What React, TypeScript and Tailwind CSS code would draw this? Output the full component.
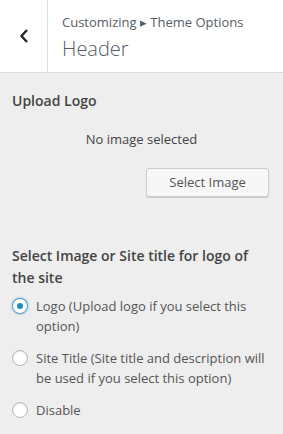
import React, { useState } from "react";

const options = [
  { id: "logo", label: "Logo (Upload logo if you select this option)" },
  { id: "title", label: "Site Title (Site title and description will be used if you select this option)" },
  { id: "disable", label: "Disable" },
];

const Radio = ({ checked }: { checked: boolean }) => (
  <span className="mt-[2px] flex h-4 w-4 shrink-0 items-center justify-center rounded-full border border-[#b4b9be] bg-white shadow-[inset_0_1px_2px_rgba(0,0,0,0.1)] data-[on=true]:border-[#5b9dd9] data-[on=true]:shadow-[0_0_2px_rgba(30,140,190,0.8)]" data-on={checked}>
    {checked && <span className="h-[6px] w-[6px] rounded-full bg-[#1e8cbe]" />}
  </span>
);

export default function App() {
  const [choice, setChoice] = useState("logo");

  return (
    <div className="min-h-[434px] w-[283px] bg-[#eeeeee] font-['Open_Sans',sans-serif] text-[#444]">
      <div className="flex h-[73px] border-b border-[#dddddd] bg-white">
        <button className="flex w-[48px] items-center justify-center border-r border-[#dddddd] text-[#23282d]">
          <svg width="10" height="16" viewBox="0 0 10 16">
            <path d="M8 2 L2.5 8 L8 14" fill="none" stroke="currentColor" strokeWidth="2.4" />
          </svg>
        </button>
        <div className="pl-[14px] pt-[13px]">
          <div className="text-[13px] leading-[18px] text-[#555d66]">Customizing ▸ Theme Options</div>
          <div className="mt-[6px] text-[20px] font-light leading-[24px] text-[#555d66]">Header</div>
        </div>
      </div>

      <div className="px-3 pt-[18px]">
        <h3 className="text-[14px] font-semibold leading-[20px]">Upload Logo</h3>
        <p className="mt-[19px] text-center text-[13px] leading-[18px] text-[#444]">No image selected</p>
        <div className="mt-[20px] flex justify-end pr-[2px]">
          <button className="h-[29px] w-[123px] rounded-[3px] border border-[#cccccc] bg-[#f7f7f7] text-[13px] text-[#555] shadow-[0_1px_0_#cccccc]">
            Select Image
          </button>
        </div>

        <h3 className="mt-[48px] text-[14px] font-semibold leading-[22px]">Select Image or Site title for logo of the site</h3>

        <div className="mt-[7px] flex flex-col gap-[12px]">
          {options.map((o) => (
            <label key={o.id} className="flex cursor-pointer gap-[8px]" onClick={() => setChoice(o.id)}>
              <Radio checked={choice === o.id} />
              <span className="text-[13px] leading-[20px] text-[#555]">{o.label}</span>
            </label>
          ))}
        </div>
      </div>
    </div>
  );
}
